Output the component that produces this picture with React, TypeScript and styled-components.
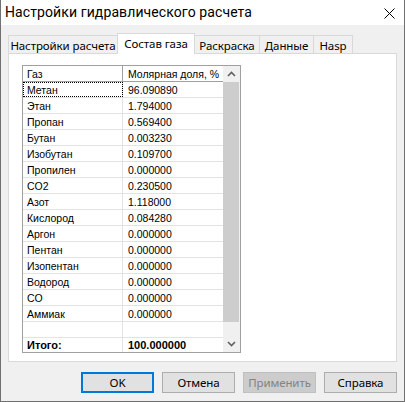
import React from 'react';
import styled, { createGlobalStyle, css } from 'styled-components';

const GlobalStyle = createGlobalStyle`
  html, body {
    margin: 0;
    padding: 0;
    background: #ffffff;
  }
  * {
    box-sizing: border-box;
  }
`;

type GasRow = {
  name: string
  value: string
}

const rows: GasRow[] = [
  { name: 'Метан', value: '96.090890' },
  { name: 'Этан', value: '1.794000' },
  { name: 'Пропан', value: '0.569400' },
  { name: 'Бутан', value: '0.003230' },
  { name: 'Изобутан', value: '0.109700' },
  { name: 'Пропилен', value: '0.000000' },
  { name: 'CO2', value: '0.230500' },
  { name: 'Азот', value: '1.118000' },
  { name: 'Кислород', value: '0.084280' },
  { name: 'Аргон', value: '0.000000' },
  { name: 'Пентан', value: '0.000000' },
  { name: 'Изопентан', value: '0.000000' },
  { name: 'Водород', value: '0.000000' },
  { name: 'CO', value: '0.000000' },
  { name: 'Аммиак', value: '0.000000' },
];

const tabs = [
  { label: 'Настройки расчета', width: 110 },
  { label: 'Состав газа', width: 78 },
  { label: 'Раскраска', width: 66 },
  { label: 'Данные', width: 55 },
  { label: 'Hasp', width: 40 },
];

const buttons = [
  { label: 'OK', primary: true },
  { label: 'Отмена' },
  { label: 'Применить', disabled: true },
  { label: 'Справка' },
];

const uiFont = `"Noto Sans", Roboto, sans-serif`;
const titleFont = `Roboto, "Noto Sans", sans-serif`;
const gridFont = `"Liberation Sans", Arial, sans-serif`;

const Window = styled.div`
  width: 405px;
  height: 402px;
  display: flex;
  flex-direction: column;
  background: #f0f0f0;
  border: 1px solid #707070;
  border-top: none;
  font-family: ${uiFont};
  color: #000;
`;

const TitleBar = styled.div`
  height: 25px;
  flex: none;
  display: flex;
  align-items: center;
  justify-content: space-between;
  background: #ffffff;
  padding: 0 9px 1px 4px;
`;

const Title = styled.span`
  font-family: ${titleFont};
  font-size: 14px;
  letter-spacing: 0.1px;
`;

const CloseIcon = styled.svg`
  width: 11px;
  height: 11px;
  margin-top: 2px;
`;

const Body = styled.div`
  flex: 1;
  display: flex;
  flex-direction: column;
  padding: 8px 7px 0 7px;
`;

const TabRow = styled.div`
  display: flex;
  align-items: flex-end;
  height: 20px;
`;

const Tab = styled.div<{ $active?: boolean; $width: number }>`
  width: ${p => p.$width}px;
  height: 18px;
  margin-left: -1px;
  display: flex;
  align-items: center;
  justify-content: center;
  white-space: nowrap;
  border: 1px solid #d9d9d9;
  border-bottom: none;
  background: #f0f0f0;
  font-size: 11.5px;
  letter-spacing: -0.1px;
  padding-top: 1px;
  &:first-child {
    margin-left: 0;
  }
  ${p => p.$active && css`
    height: 21px;
    margin-bottom: -1px;
    background: #ffffff;
    position: relative;
    z-index: 1;
    padding-top: 0;
    padding-bottom: 2px;
  `}
`;

const Panel = styled.div`
  height: 309px;
  flex: none;
  background: #ffffff;
  border: 1px solid #d9d9d9;
  padding: 11px 0 0 13px;
`;

const Grid = styled.div`
  width: 219px;
  height: 288px;
  display: flex;
  border: 1px solid #a0a0a0;
  font-family: ${gridFont};
  font-size: 10.5px;
`;

const Table = styled.div`
  width: 200px;
  display: flex;
  flex-direction: column;
`;

const Row = styled.div<{ $header?: boolean; $last?: boolean }>`
  display: grid;
  grid-template-columns: 100px 100px;
  height: 16px;
  border-bottom: 1px solid ${p => (p.$header ? '#a0a0a0' : '#e3e3e3')};
  ${p => p.$last && css`
    border-bottom: none;
    height: 14px;
    font-weight: bold;
    font-size: 11px;
  `}
`;

const Cell = styled.div<{ $header?: boolean; $focused?: boolean }>`
  display: flex;
  align-items: center;
  padding-left: 4px;
  white-space: nowrap;
  overflow: hidden;
  border-right: 1px solid ${p => (p.$header ? '#a0a0a0' : '#e3e3e3')};
  &:last-child {
    border-right: none;
    padding-left: 5px;
  }
  ${p => p.$focused && css`
    outline: 1px dotted #000;
    outline-offset: -1px;
  `}
`;

const ScrollBar = styled.div`
  width: 17px;
  display: flex;
  flex-direction: column;
  background: #f0f0f0;
`;

const ScrollButton = styled.div`
  height: 16px;
  flex: none;
  display: flex;
  align-items: center;
  justify-content: center;
`;

const Thumb = styled.div`
  height: 240px;
  margin: 0 1px 0 0;
  background: #cdcdcd;
`;

const Track = styled.div`
  flex: 1;
`;

const ButtonRow = styled.div`
  display: flex;
  justify-content: flex-end;
  gap: 8px;
  margin-top: 10px;
`;

const Button = styled.div<{ $primary?: boolean; $disabled?: boolean }>`
  width: 73px;
  height: 21px;
  display: flex;
  align-items: center;
  justify-content: center;
  background: #e1e1e1;
  border: 1px solid #adadad;
  font-size: 11.5px;
  letter-spacing: -0.1px;
  ${p => p.$primary && css`
    border: 2px solid #0078d7;
  `}
  ${p => p.$disabled && css`
    background: #cccccc;
    border-color: #bfbfbf;
    color: #838383;
  `}
`;

const Chevron = ({ up }: { up?: boolean }) => (
  <svg width="9" height="6" viewBox="0 0 9 6">
    <path
      d={up ? 'M1 5 L4.5 1.5 L8 5' : 'M1 1 L4.5 4.5 L8 1'}
      fill="none"
      stroke="#606060"
      strokeWidth="1.6"
    />
  </svg>
);

export default function App() {
  return (
    <>
      <GlobalStyle />
      <Window>
        <TitleBar>
          <Title>Настройки гидравлического расчета</Title>
          <CloseIcon viewBox="0 0 11 11">
            <path d="M0.5 0.5 L10.5 10.5 M10.5 0.5 L0.5 10.5" stroke="#000" strokeWidth="1" />
          </CloseIcon>
        </TitleBar>
        <Body>
          <TabRow>
            {tabs.map(t => (
              <Tab key={t.label} $width={t.width} $active={t.label === 'Состав газа'}>
                {t.label}
              </Tab>
            ))}
          </TabRow>
          <Panel>
            <Grid>
              <Table>
                <Row $header>
                  <Cell $header>Газ</Cell>
                  <Cell $header>Молярная доля, %</Cell>
                </Row>
                {rows.map((r, i) => (
                  <Row key={r.name}>
                    <Cell $focused={i === 0}>{r.name}</Cell>
                    <Cell>{r.value}</Cell>
                  </Row>
                ))}
                <Row>
                  <Cell />
                  <Cell />
                </Row>
                <Row $last>
                  <Cell>Итого:</Cell>
                  <Cell>100.000000</Cell>
                </Row>
              </Table>
              <ScrollBar>
                <ScrollButton><Chevron up /></ScrollButton>
                <Thumb />
                <Track />
                <ScrollButton><Chevron /></ScrollButton>
              </ScrollBar>
            </Grid>
          </Panel>
          <ButtonRow>
            {buttons.map(b => (
              <Button key={b.label} $primary={b.primary} $disabled={b.disabled}>
                {b.label}
              </Button>
            ))}
          </ButtonRow>
        </Body>
      </Window>
    </>
  );
}
